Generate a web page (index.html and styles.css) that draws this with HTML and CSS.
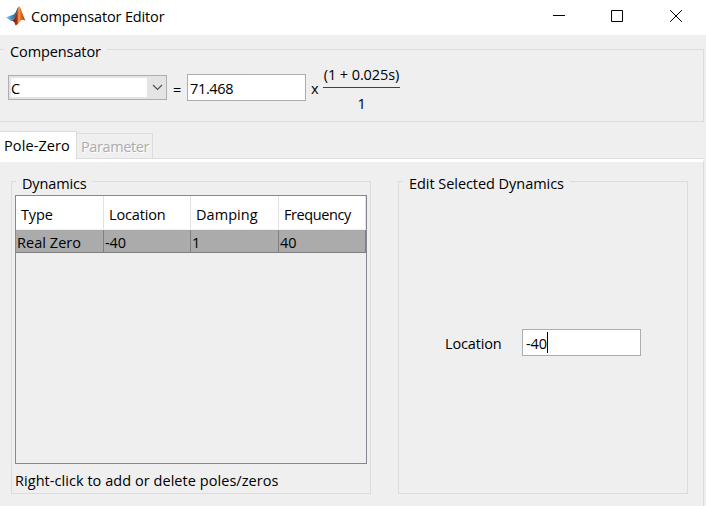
FILE: index.html
```html
<!DOCTYPE html>
<html lang="en">
<head>
<meta charset="utf-8">
<title>Compensator Editor</title>
<link rel="stylesheet" href="styles.css">
</head>
<body>
<div class="window">
  <header class="titlebar">
    <svg class="logo" width="20" height="20" viewBox="0 0 20 20">
      <defs>
        <linearGradient id="blue" x1="0" x2="1"><stop offset="0" stop-color="#8cc4e4"/><stop offset=".55" stop-color="#2f82b8"/><stop offset="1" stop-color="#28384e"/></linearGradient>
        <linearGradient id="flame" x1="0" x2="1"><stop offset="0" stop-color="#5e1c22"/><stop offset=".38" stop-color="#a52d18"/><stop offset=".52" stop-color="#f8a23c"/><stop offset=".7" stop-color="#e2601c"/><stop offset="1" stop-color="#a82b16"/></linearGradient>
      </defs>
      <path fill="url(#blue)" d="M0 11.600 6.200 9c1.800-.3 2.600-1.500 3.600-3.100C10.700 4 11.600 1.500 13 .5L9.500 10.500 5.500 15Z"/>
      <path fill="url(#flame)" d="M13 .3c2 .5 3.600 9.200 6.600 14.500-2.200-1.700-4-1.400-5.300.3-1.600 2-2.800 3.600-4.800 4.400-.5-2.400-1.400-4.300-3.900-4.700C9.400 13.500 11 5 13 .3Z"/>
    </svg>
    <h1 class="title">Compensator Editor</h1>
    <svg class="controls" width="130" height="14" viewBox="0 0 130 14" fill="none" stroke="#000" stroke-width="1">
      <path d="M0 6.500h12M58.500 1.500h11v11h-11Z"/>
      <path d="m117.200 1.200 11.600 11.600m0-11.600-11.600 11.600"/>
    </svg>
  </header>

  <fieldset class="group compensator">
    <legend>Compensator</legend>
    <div class="equation">
      <div class="combo">
        <span class="combo-value">C</span>
        <svg class="chevron" width="11" height="7" viewBox="0 0 11 7" fill="none" stroke="#505050" stroke-width="1.200"><path d="m1 1 4.500 4.500L10 1"/></svg>
      </div>
      <span class="equals">=</span>
      <div class="field gain">71.468</div>
      <span class="times">x</span>
      <div class="fraction"><span class="numerator">(1 + 0.025s)</span><span class="denominator">1</span></div>
    </div>
  </fieldset>

  <nav class="tabs">
    <span class="tab active">Pole-Zero</span>
    <span class="tab disabled snug">Parameter</span>
    <span class="tab-rule"></span>
  </nav>

  <main class="panel">
    <fieldset class="group dynamics">
      <legend>Dynamics</legend>
      <div class="grid">
        <div class="row head"><span>Type</span><span>Location</span><span class="loose">Damping</span><span class="snug">Frequency</span></div>
        <div class="row selected"><span class="loose">Real Zero</span><span>-40</span><span>1</span><span>40</span></div>
      </div>
      <p class="hint">Right-click to add or delete poles/zeros</p>
    </fieldset>
    <fieldset class="group edit">
      <legend>Edit Selected Dynamics</legend>
      <div class="edit-row">
        <span class="edit-label">Location</span>
        <div class="field location">-40<i class="caret"></i></div>
      </div>
    </fieldset>
  </main>
</div>
</body>
</html>
```
FILE: styles.css
```css
* { box-sizing: border-box; }
body {
  margin: 0;
  font: 14.5px/20px "Open Sans", "Noto Sans", sans-serif;
  letter-spacing: -0.15px;
  color: #000;
  background: #efefef;
  white-space: nowrap;
}
.snug { letter-spacing: -0.4px; }
.loose { letter-spacing: 0.05px; }
.window { width: 706px; height: 506px; overflow: hidden; }

.titlebar { display: flex; align-items: center; height: 35px; padding-left: 6px; background: #fff; }
.logo { margin-top: -3px; }
.title { margin: -2px 0 0 5px; width: 522px; font-size: inherit; font-weight: 400; }
.controls { margin-top: -3px; }

.group { min-width: 0; margin: 0; padding: 0; border: 1px solid #dcdcdc; }
.group legend { height: 26px; padding: 6px 6px 0; }

.compensator { width: 704px; height: 86px; margin-top: 1px; border-left: 0; }
.compensator legend { margin-left: 4px; letter-spacing: -0.1px; }
.equation { display: flex; height: 50px; padding-left: 8px; margin-top: 3px; }
.combo { display: flex; align-items: center; width: 159px; height: 25px; margin-top: 10px; border: 1px solid #adadb3; background: #e4e4e4; padding-left: 2px; }
.combo-value { width: 136px; height: 19px; background: #fff; line-height: 22px; }
.chevron { margin-left: 5px; }
.equals { width: 20px; margin-top: 15px; padding-left: 6px; }
.field { width: 119px; height: 27px; border: 1px solid #abadb3; background: #fff; padding-left: 3px; line-height: 27px; }
.gain { margin-top: 9px; padding-left: 2px; line-height: 28px; letter-spacing: -0.35px; }
.times { width: 17px; margin-top: 14px; padding-left: 5px; }
.fraction { display: flex; flex-direction: column; width: 77px; text-align: center; }
.numerator { height: 23px; border-bottom: 1px solid #404040; letter-spacing: -0.1px; }
.denominator { margin-top: 6px; }

.tabs { display: flex; align-items: flex-end; height: 28px; margin-top: 9px; }
.tab { border: 1px solid #dcdcdc; border-bottom: 0; }
.active { width: 77px; height: 28px; border-left: 0; background: #fff; padding: 4px 0 0 4px; letter-spacing: 0.1px; }
.disabled { width: 76px; height: 26px; border-left: 0; border-bottom: 1px solid #dcdcdc; padding: 3px 0 0 4px; color: #acacac; text-shadow: 1px 1px #fff; }
.tab-rule { width: 551px; border-bottom: 1px solid #dcdcdc; }

.panel { display: flex; width: 704px; height: 348px; border-top: 3px solid #fff; border-right: 1px solid #dcdcdc; padding: 6px 0 0 11px; }
.dynamics { width: 360px; height: 326px; }
.dynamics legend, .edit legend { margin-left: 4px; }
.edit legend { letter-spacing: -0.05px; }
.grid { width: 352px; height: 269px; margin: 1px 0 0 3px; border: 1px solid #828790; }
.row { display: grid; grid-template-columns: 88px 87px 88px 87px; }
.head { height: 34px; background: #fff; border-bottom: 1px solid #efefef; line-height: 38px; }
.head span { height: 33px; padding-left: 5px; border-right: 1px solid #e2e2e2; }
.selected { height: 23px; background: #ababab; border-bottom: 1px solid #808080; line-height: 26px; }
.selected span { height: 22px; padding-left: 1px; border-right: 1px solid #808080; }
.hint { margin: 7px 0 0 3px; letter-spacing: 0.05px; }

.edit { width: 290px; height: 326px; margin-left: 27px; }
.edit-row { display: flex; margin: 135px 0 0 46px; }
.edit-label { width: 77px; line-height: 30px; height: 27px; }
.location { display: flex; align-items: flex-start; }
.caret { width: 1px; height: 21px; margin-top: 2px; background: #000; }
```
